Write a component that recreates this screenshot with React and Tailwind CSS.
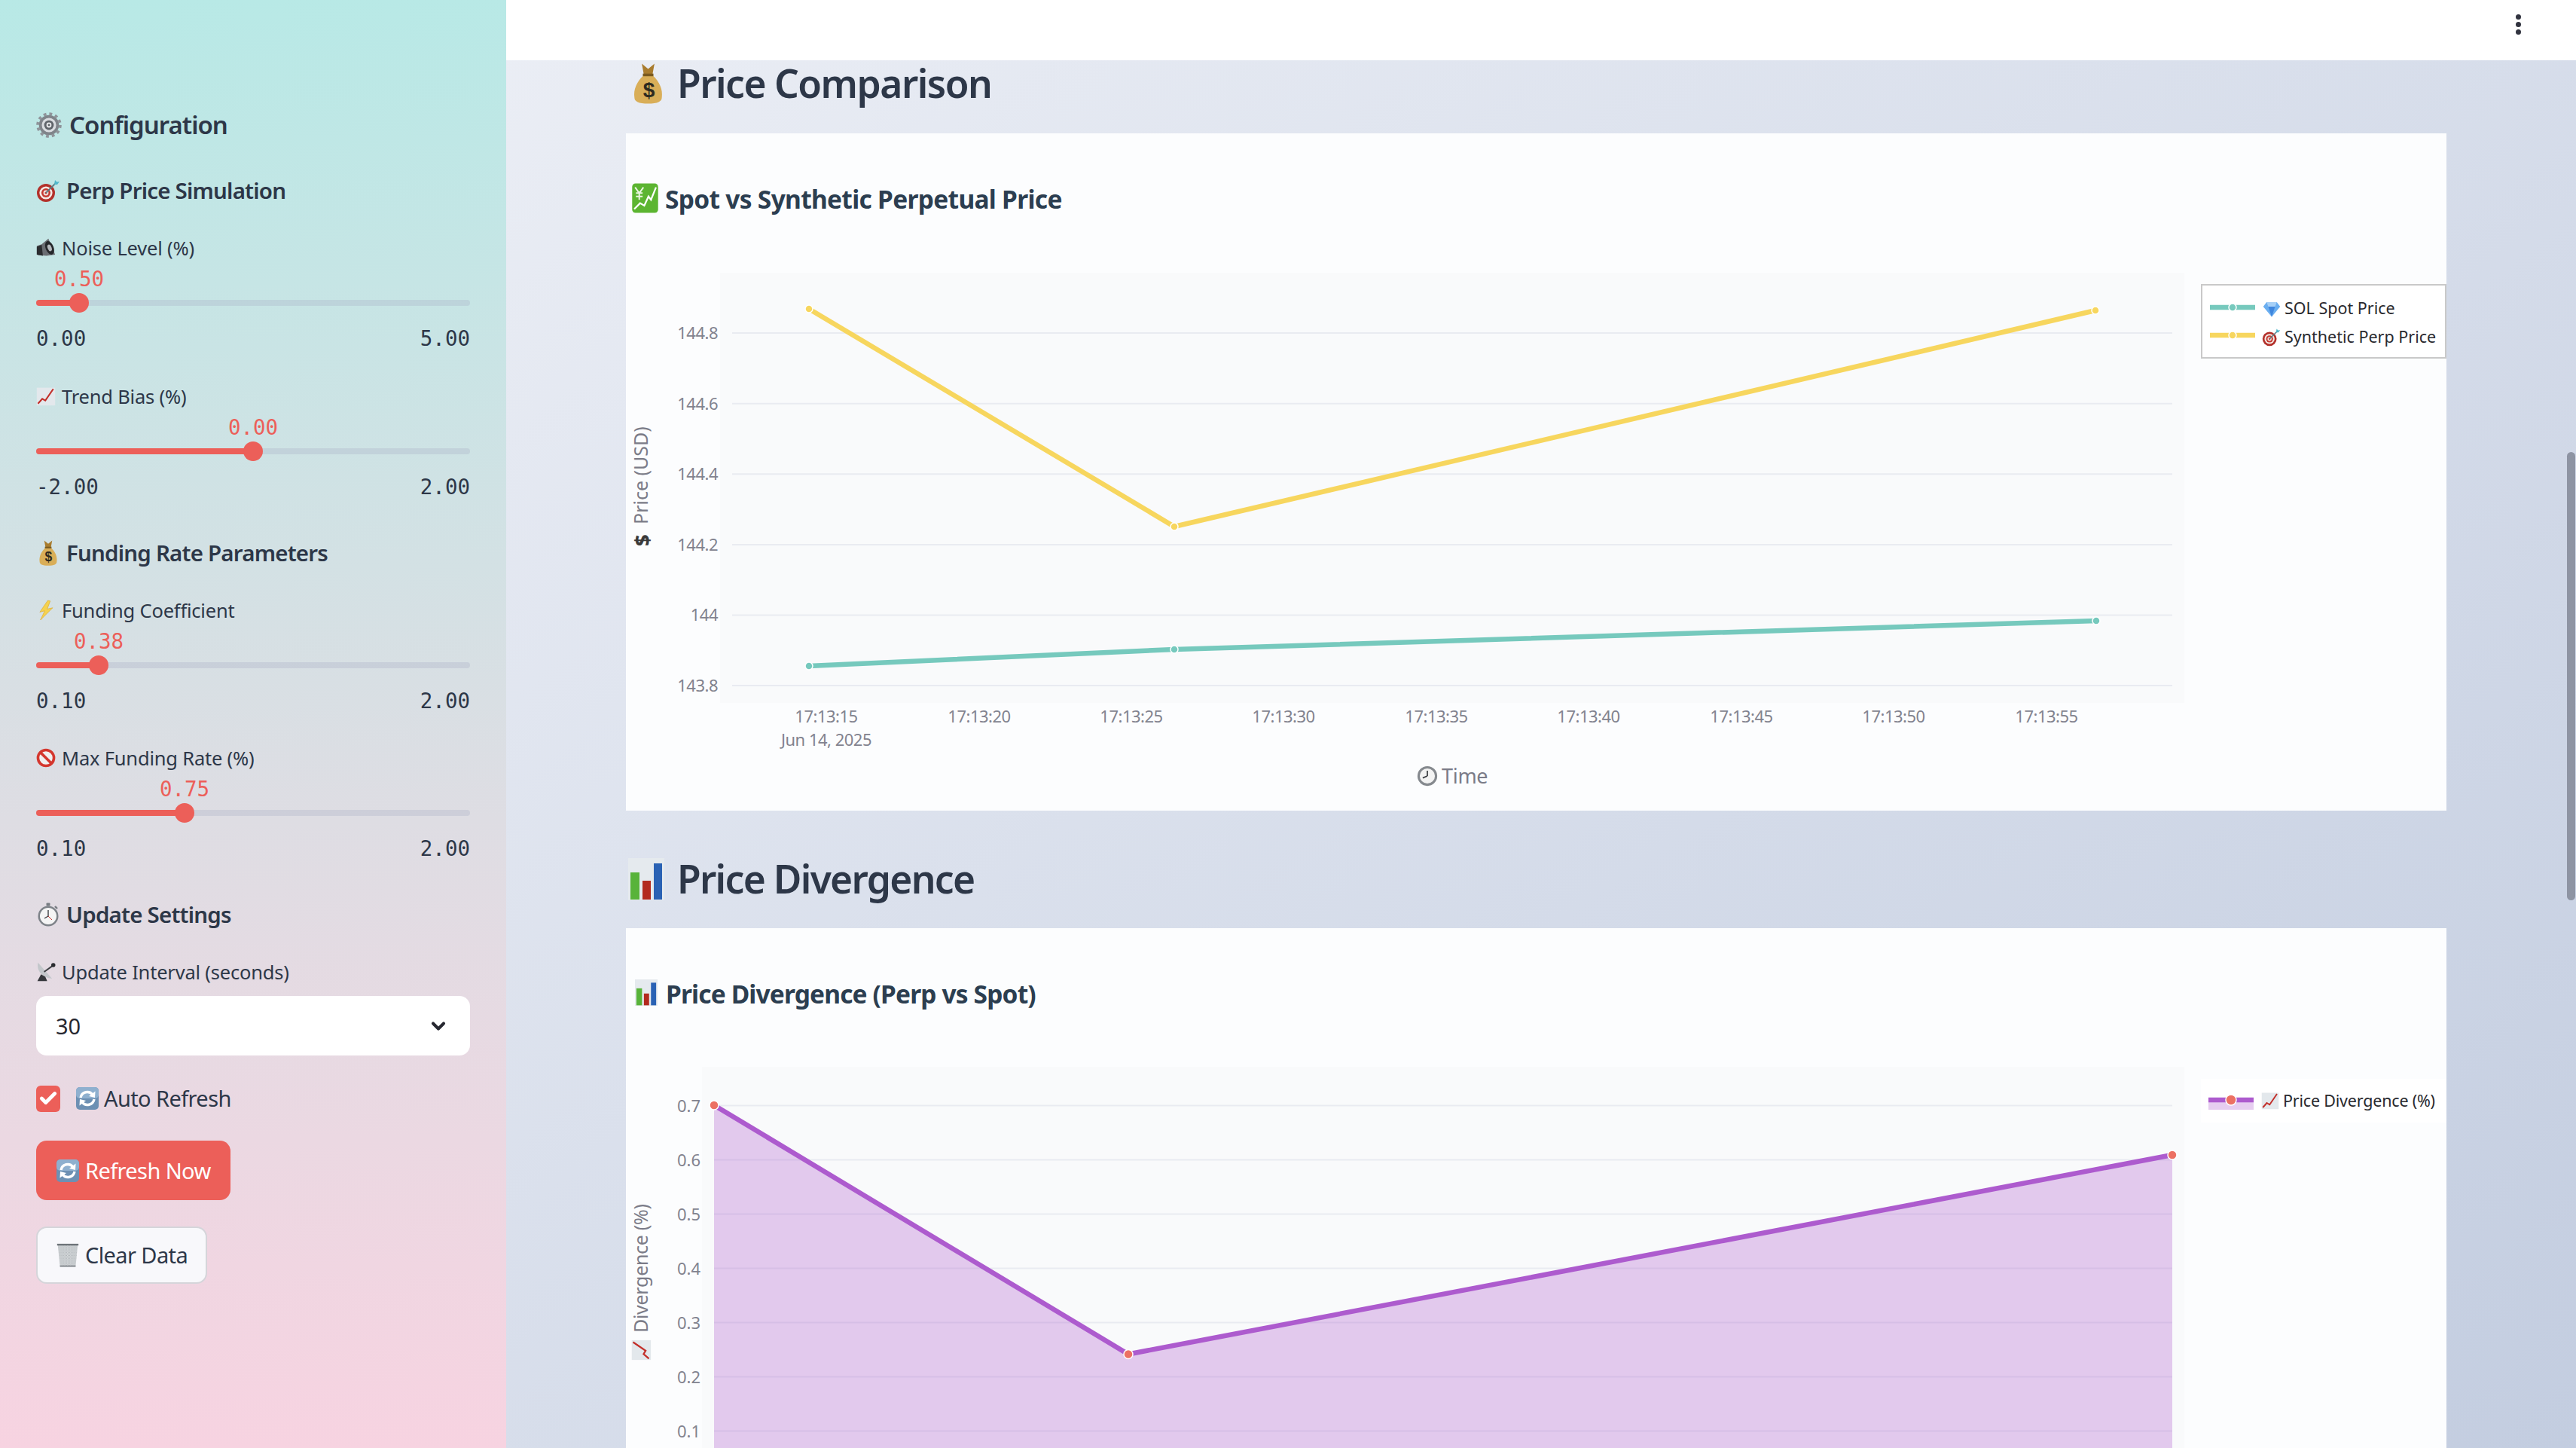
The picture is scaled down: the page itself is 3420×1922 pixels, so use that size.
import { ChevronDown, Check } from "lucide-react";

const Gear = (p) => (
  <svg viewBox="0 0 32 32" {...p}>
    <circle cx="16" cy="16" r="12.5" fill="#7f848a" />
    <circle cx="16" cy="16" r="14" fill="none" stroke="#8f949a" strokeWidth="3.6" strokeDasharray="3.6 3.73" />
    <circle cx="16" cy="16" r="9" fill="#d9dce0" />
    <circle cx="16" cy="16" r="6" fill="#5f646a" />
    <circle cx="16" cy="16" r="3.2" fill="#e8eaec" />
    <circle cx="16" cy="16" r="1.4" fill="#5f646a" />
  </svg>
);

const Target = (p) => (
  <svg viewBox="0 0 32 32" {...p}>
    <circle cx="13" cy="19" r="12" fill="#b3312b" />
    <circle cx="13" cy="19" r="8.6" fill="#f4e9e4" />
    <circle cx="13" cy="19" r="6" fill="#c63a32" />
    <circle cx="13" cy="19" r="3.4" fill="#f4e9e4" />
    <circle cx="13" cy="19" r="1.6" fill="#c63a32" />
    <path d="M13 19 L26 6" stroke="#5d7a80" strokeWidth="1.8" />
    <path d="M24 8 L25 2 L27.5 4.5 L31 4 L28 8 Z" fill="#4fb6c9" />
  </svg>
);

const Speaker = (p) => (
  <svg viewBox="0 0 32 32" {...p}>
    <path d="M1 13 L9 10 L20 1 L31 27 L17 29 L3 28 Z" fill="#6a6d72" />
    <ellipse cx="22" cy="16" rx="6.5" ry="11.5" fill="#26282b" transform="rotate(-22 22 16)" />
    <ellipse cx="22" cy="16" rx="3.2" ry="5.6" fill="#b5b9bd" transform="rotate(-22 22 16)" />
    <path d="M1 14 L1 27 L11 29 L9 11 Z" fill="#2b2d30" />
  </svg>
);

const ChartUp = (p) => (
  <svg viewBox="0 0 32 32" {...p}>
    <rect x="1" y="2" width="30" height="29" fill="#e3e8ec" />
    <path d="M3 28 L10 20 L15 23 L28 4" fill="none" stroke="#c22f2a" strokeWidth="2.6" />
  </svg>
);

const MoneyBag = (p) => (
  <svg viewBox="0 0 32 40" {...p}>
    <path d="M10 1 L16 6 L22 1 L20 12 L12 12 Z" fill="#a97c2e" />
    <path d="M12 12 C5 18 2 26 3 33 C3 37 7 39 16 39 C25 39 29 37 29 33 C30 26 27 18 20 12 Z" fill="#d9ae58" />
    <rect x="11" y="10.5" width="10" height="2.5" fill="#7a5a1f" />
    <text x="16" y="33" textAnchor="middle" fontSize="20" fontWeight="700" fill="#2e2a20" fontFamily="'Liberation Sans',sans-serif">$</text>
  </svg>
);

const Bolt = (p) => (
  <svg viewBox="0 0 32 32" {...p}>
    <path d="M19 0 L6 19 L14 17 L7 32 L27 12 L18 14 L23 1 Z" fill="#f5d24f" stroke="#dca92a" strokeWidth="0.8" />
  </svg>
);

const NoEntry = (p) => (
  <svg viewBox="0 0 32 32" {...p}>
    <circle cx="16" cy="16" r="13" fill="#f1efef" stroke="#d4372e" strokeWidth="4.4" />
    <path d="M7 7 L25 25" stroke="#d4372e" strokeWidth="4.4" />
  </svg>
);

const Stopwatch = (p) => (
  <svg viewBox="0 0 32 32" {...p}>
    <rect x="13.5" y="0.5" width="5" height="4" rx="1" fill="#777c82" />
    <path d="M25 5 L28 8" stroke="#777c82" strokeWidth="2.4" />
    <circle cx="16" cy="18" r="13.5" fill="#7d8288" />
    <circle cx="16" cy="18" r="11" fill="#f5f5f5" />
    <path d="M16 18 L16 10 M16 18 L11 21" stroke="#3c3f44" strokeWidth="1.4" />
    <path d="M16 18 L21 23" stroke="#c63a32" strokeWidth="1" />
  </svg>
);

const Dish = (p) => (
  <svg viewBox="0 0 32 32" {...p}>
    <path d="M3 1 C0 14 10 26 26 27 Z" fill="#c3c7cb" />
    <path d="M8 20 L2 31 L18 31 L15 24 Z" fill="#35383c" />
    <path d="M13 16 L27 6" stroke="#3b3e42" strokeWidth="2.4" />
    <circle cx="28" cy="5" r="3.4" fill="#2a2c2f" />
  </svg>
);

const Refresh = (p) => (
  <svg viewBox="0 0 32 32" {...p}>
    <rect x="1" y="1" width="30" height="30" rx="5" fill="#6d90b3" />
    <rect x="1" y="1" width="30" height="15" rx="5" fill="#8fb0cf" />
    <path d="M7 15 A9 9 0 0 1 23 11" fill="none" stroke="#fff" strokeWidth="3.4" />
    <path d="M26.5 6.5 L26 15 L18 13 Z" fill="#fff" />
    <path d="M25 17 A9 9 0 0 1 9 21" fill="none" stroke="#fff" strokeWidth="3.4" />
    <path d="M5.5 25.5 L6 17 L14 19 Z" fill="#fff" />
  </svg>
);

const Trash = (p) => (
  <svg viewBox="0 0 32 36" {...p}>
    <defs>
      <pattern id="mesh" width="2" height="2" patternUnits="userSpaceOnUse">
        <rect width="2" height="2" fill="#e0e3e5" />
        <rect width="1" height="1" fill="#a3a9ad" />
        <rect x="1" y="1" width="1" height="1" fill="#b9bec1" />
      </pattern>
    </defs>
    <path d="M2 4 L30 4 L27 34 L5 34 Z" fill="url(#mesh)" />
    <rect x="1" y="2" width="30" height="2.5" fill="#6e7479" />
    <rect x="5" y="32.5" width="22" height="2" fill="#82888d" />
  </svg>
);

const ChartYen = (p) => (
  <svg viewBox="0 0 32 36" {...p}>
    <rect x="0.5" y="0.5" width="31" height="35" rx="4" fill="#5cb531" />
    <path d="M4 5 L9 12 L14 5 M9 12 L9 20 M5 12 L13 12 M5 16 L13 16" fill="none" stroke="#eaf6e0" strokeWidth="1.8" />
    <path d="M3 31 L10 24 L15 27 L20 16 L23 20 L29 5" fill="none" stroke="#fff" strokeWidth="2" />
  </svg>
);

const Bars = (p) => (
  <svg viewBox="0 0 48 56" {...p}>
    <rect width="48" height="56" fill="#e5eaee" />
    <rect x="3" y="19" width="12" height="36" fill="#58b33a" />
    <rect x="19" y="30" width="11" height="25" fill="#b32a1e" />
    <rect x="34" y="7" width="11" height="48" fill="#2a62b4" />
  </svg>
);

const Diamond = (p) => (
  <svg viewBox="0 0 32 32" {...p}>
    <path d="M7 4 L25 4 L31 12 L16 30 L1 12 Z" fill="#6aaef0" />
    <path d="M10 12 L22 12 L16 30 Z" fill="#3f86de" />
    <path d="M7 4 L25 4 L22 12 L10 12 Z" fill="#a6d0f7" />
  </svg>
);

const Clock = (p) => (
  <svg viewBox="0 0 32 32" {...p}>
    <circle cx="16" cy="16" r="15" fill="#85898e" />
    <circle cx="16" cy="16" r="11.5" fill="#f3f3f3" />
    <path d="M16 16 L16 8 M16 16 L9 19" stroke="#3c3f44" strokeWidth="2" />
  </svg>
);

const mono = "font-['DejaVu_Sans_Mono',monospace]";

function SliderBlock({ icon, label, value, min, max, thumb, className }) {
  return (
    <div className={className}>
      <div className="flex h-[36px] items-center text-[25.5px] tracking-[-0.2px] text-[#2d3748]">
        <span className="mr-[8px] flex w-[26px] justify-center">{icon}</span>
        {label}
      </div>
      <div className="relative mt-[7px] h-[64px]">
        <div
          className={`absolute top-0 h-[32px] -translate-x-1/2 text-[27.5px] leading-[32px] text-[#ec5f59] ${mono}`}
          style={{ left: thumb }}
        >
          {value}
        </div>
        <div className="absolute top-[44px] h-[8px] w-full rounded-full bg-[#a5adc4]/30" />
        <div className="absolute top-[44px] h-[8px] rounded-l-full bg-[#ec5f59]" style={{ width: thumb }} />
        <div
          className="absolute top-[35px] h-[26px] w-[26px] -translate-x-1/2 rounded-full bg-[#ec5f59]"
          style={{ left: thumb }}
        />
      </div>
      <div className={`mt-[14px] flex h-[36px] items-center justify-between text-[27.5px] text-[#2d3748] ${mono}`}>
        <span>{min}</span>
        <span>{max}</span>
      </div>
    </div>
  );
}

function SideHeading({ icon, children, className }) {
  return (
    <div className={`flex h-[44px] items-center text-[29.5px] font-semibold tracking-[-0.8px] text-[#2d3748] ${className}`}>
      <span className="mr-[8px] flex w-[32px] justify-center">{icon}</span>
      {children}
    </div>
  );
}

function Sidebar() {
  return (
    <aside className="h-full w-[672px] shrink-0 bg-gradient-to-b from-[#b8e9e6] to-[#f7d3e1] pl-[48px] pr-[48px] pt-[141px]">
      <div className="flex h-[50px] items-center text-[33px] font-semibold tracking-[-1px] text-[#2d3748]">
        <Gear className="mr-[10px] h-[36px] w-[34px]" />
        Configuration
      </div>
      <SideHeading className="mt-[40px]" icon={<Target className="h-[32px] w-[32px]" />}>
        Perp Price Simulation
      </SideHeading>
      <SliderBlock
        className="mt-[36px]"
        icon={<Speaker className="h-[30px] w-[28px]" />}
        label="Noise Level (%)"
        value="0.50"
        min="0.00"
        max="5.00"
        thumb="57px"
      />
      <SliderBlock
        className="mt-[40px]"
        icon={<ChartUp className="h-[28px] w-[26px]" />}
        label="Trend Bias (%)"
        value="0.00"
        min="-2.00"
        max="2.00"
        thumb="288px"
      />
      <SideHeading className="mt-[47px]" icon={<MoneyBag className="h-[36px] w-[28px]" />}>
        Funding Rate Parameters
      </SideHeading>
      <SliderBlock
        className="mt-[36px]"
        icon={<Bolt className="h-[32px] w-[26px]" />}
        label="Funding Coefficient"
        value="0.38"
        min="0.10"
        max="2.00"
        thumb="83px"
      />
      <SliderBlock
        className="mt-[39px]"
        icon={<NoEntry className="h-[28px] w-[28px]" />}
        label="Max Funding Rate (%)"
        value="0.75"
        min="0.10"
        max="2.00"
        thumb="197px"
      />
      <SideHeading className="mt-[47px]" icon={<Stopwatch className="h-[34px] w-[32px]" />}>
        Update Settings
      </SideHeading>
      <div className="mt-[36px] flex h-[36px] items-center text-[25.5px] tracking-[-0.2px] text-[#2d3748]">
        <span className="mr-[8px] flex w-[26px] justify-center">
          <Dish className="h-[30px] w-[28px]" />
        </span>
        Update Interval (seconds)
      </div>
      <div className="mt-[14px] flex h-[79px] items-center justify-between rounded-[14px] bg-white pl-[26px] pr-[28px] text-[29px] text-[#262730]">
        30
        <ChevronDown className="h-[28px] w-[28px] text-[#262730]" strokeWidth={3.5} />
      </div>
      <div className="mt-[37px] flex h-[40px] items-center text-[29px] tracking-[-0.6px] text-[#2d3748]">
        <span className="mr-[20px] flex h-[35px] w-[32px] items-center justify-center rounded-[6px] bg-[#ec5f59]">
          <Check className="h-[26px] w-[26px] text-white" strokeWidth={4.5} />
        </span>
        <Refresh className="mr-[6px] h-[34px] w-[32px]" />
        Auto Refresh
      </div>
      <button className="mt-[36px] flex h-[79px] w-[258px] items-center rounded-[14px] bg-[#ec5f59] pl-[26px] text-[29px] tracking-[-0.6px] text-white">
        <Refresh className="mr-[7px] h-[34px] w-[32px]" />
        Refresh Now
      </button>
      <button className="mt-[35px] flex h-[76px] w-[227px] items-center rounded-[14px] border-2 border-[#d5d5da] bg-[#f8f8fb] pl-[24px] text-[29px] tracking-[-0.6px] text-[#2d3748]">
        <Trash className="mr-[7px] h-[34px] w-[32px]" />
        Clear Data
      </button>
    </aside>
  );
}

const tickProps = { fontSize: 22, fill: "#82838f", letterSpacing: "-0.5" };

function PriceChart() {
  const grid = [
    [442, "144.8"],
    [535.7, "144.6"],
    [629.3, "144.4"],
    [723, "144.2"],
    [816.4, "144"],
    [910, "143.8"],
  ];
  const xTicks = [
    [1097, "17:13:15"],
    [1300, "17:13:20"],
    [1502, "17:13:25"],
    [1704, "17:13:30"],
    [1907, "17:13:35"],
    [2109, "17:13:40"],
    [2312, "17:13:45"],
    [2514, "17:13:50"],
    [2717, "17:13:55"],
  ];
  const teal = [[1074, 884], [1559, 862], [2783, 824]];
  const yellow = [[1074, 410], [1559, 699], [2782, 412]];
  return (
    <svg viewBox="831 177 2417 899" className="block h-full w-full">
      <ChartYen x="838" y="243" width="37" height="40" />
      <text x="883" y="277" fontSize="33.5" fontWeight="700" letterSpacing="-0.7" fill="#2c3e50">Spot vs Synthetic Perpetual Price</text>
      <rect x="956" y="362" width="1944" height="571" fill="#f9fafb" />
      {grid.map(([y, t]) => (
        <g key={t}>
          <line x1="972" x2="2884" y1={y} y2={y} stroke="#e9ebf1" strokeWidth="2" />
          <text x="953" y={y + 8} textAnchor="end" {...tickProps}>{t}</text>
        </g>
      ))}
      {xTicks.map(([x, t]) => (
        <text key={t} x={x} y="959" textAnchor="middle" {...tickProps}>{t}</text>
      ))}
      <text x="1097" y="990" textAnchor="middle" {...tickProps}>Jun 14, 2025</text>
      <Clock x="1881" y="1016" width="28" height="28" />
      <text x="1914" y="1040" fontSize="27" fill="#7b7c88" letterSpacing="-0.3">Time</text>
      <g transform="rotate(-90 851 645)">
        <text x="771" y="656" fontSize="27" fontWeight="800" fill="#3a3a3a">$</text>
        <text x="800" y="654" fontSize="25" fill="#7b7c88">Price (USD)</text>
      </g>
      <polyline points={teal.join(" ")} fill="none" stroke="#76c9bd" strokeWidth="6.5" />
      <polyline points={yellow.join(" ")} fill="none" stroke="#f7d65e" strokeWidth="6.5" />
      {teal.map(([x, y]) => (
        <circle key={x} cx={x} cy={y} r="5" fill="#76c9bd" stroke="#fff" strokeWidth="1.5" />
      ))}
      {yellow.map(([x, y]) => (
        <circle key={x} cx={x} cy={y} r="5" fill="#f7d65e" stroke="#fff" strokeWidth="1.5" />
      ))}
      <rect x="2923" y="378" width="324" height="97" fill="#fff" stroke="#c9c9c9" strokeWidth="2" />
      <line x1="2934" x2="2994" y1="408" y2="408" stroke="#76c9bd" strokeWidth="6.5" />
      <circle cx="2964" cy="408" r="5" fill="#76c9bd" stroke="#fff" strokeWidth="1.5" />
      <Diamond x="3004" y="398" width="24" height="24" />
      <text x="3033" y="417" fontSize="21.5" fill="#2a2a2f">SOL Spot Price</text>
      <line x1="2934" x2="2994" y1="445" y2="445" stroke="#f7d65e" strokeWidth="6.5" />
      <circle cx="2964" cy="445" r="5" fill="#f7d65e" stroke="#fff" strokeWidth="1.5" />
      <Target x="3003" y="435" width="25" height="25" />
      <text x="3033" y="455" fontSize="21.5" fill="#2a2a2f">Synthetic Perp Price</text>
    </svg>
  );
}

function DivergenceChart() {
  const grid = [
    [1467.5, "0.7"],
    [1539.5, "0.6"],
    [1611.5, "0.5"],
    [1683.5, "0.4"],
    [1755.5, "0.3"],
    [1827.5, "0.2"],
    [1899.5, "0.1"],
  ];
  const pts = [[948, 1467], [1498, 1797.5], [2884, 1533]];
  return (
    <svg viewBox="831 1232 2417 899" className="block h-full w-full">
      <Bars x="843" y="1300" width="30" height="35" />
      <text x="884" y="1332" fontSize="33.5" fontWeight="700" letterSpacing="-0.85" fill="#2c3e50">Price Divergence (Perp vs Spot)</text>
      <rect x="932" y="1416" width="1968" height="715" fill="#f9fafb" />
      {grid.map(([y, t]) => (
        <g key={t}>
          <line x1="948" x2="2884" y1={y} y2={y} stroke="#e9ebf1" strokeWidth="2" />
          <text x="930" y={y + 8} textAnchor="end" {...tickProps} letterSpacing="0">{t}</text>
        </g>
      ))}
      <polygon points="948,1467 1498,1797.5 2884,1533 2884,2131 948,2131" fill="#ab5bcd" fillOpacity="0.3" />
      <polyline points={pts.join(" ")} fill="none" stroke="#ad5bce" strokeWidth="6.5" />
      {pts.map(([x, y]) => (
        <circle key={x} cx={x} cy={y} r="6" fill="#ec7063" stroke="#fff" strokeWidth="1.5" />
      ))}
      <g transform="rotate(-90 851 1700)">
        <ChartUp x="745" y="1686" width="28" height="28" />
        <text x="782" y="1709" fontSize="25" letterSpacing="-0.3" fill="#7b7c88">Divergence (%)</text>
      </g>
      <rect x="2922" y="1432" width="326" height="58" fill="#fff" />
      <rect x="2932" y="1460" width="60" height="13" fill="#e6cdf0" />
      <line x1="2932" x2="2992" y1="1460" y2="1460" stroke="#ad5bce" strokeWidth="6.5" />
      <circle cx="2962" cy="1460" r="7" fill="#ec7063" stroke="#fff" strokeWidth="1.5" />
      <ChartUp x="3002" y="1448" width="24" height="26" />
      <text x="3031" y="1469" fontSize="21.5" letterSpacing="-0.2" fill="#2a2a2f">Price Divergence (%)</text>
    </svg>
  );
}

function SectionTitle({ icon, children, className }) {
  return (
    <div className={`flex h-[62px] items-center text-[51.5px] font-semibold tracking-[-1.5px] text-[#2d3748] ${className}`}>
      {icon}
      {children}
    </div>
  );
}

export default function App() {
  return (
    <div className="flex h-[1922px] w-[3420px] overflow-hidden font-['Noto_Sans',sans-serif]">
      <Sidebar />
      <main className="relative flex h-full flex-1 flex-col overflow-hidden bg-gradient-to-br from-[#ebeef5] to-[#c3cde0]">
        <div className="flex h-[80px] shrink-0 items-center justify-end bg-white pb-[16px] pr-[73px]">
          <div className="flex flex-col gap-[3px]">
            <span className="h-[7px] w-[7px] rounded-full bg-[#31333f]" />
            <span className="h-[7px] w-[7px] rounded-full bg-[#31333f]" />
            <span className="h-[7px] w-[7px] rounded-full bg-[#31333f]" />
          </div>
        </div>
        <div className="flex flex-col pl-[159px] pr-[172px]">
          <SectionTitle icon={<MoneyBag className="ml-[7px] mr-[16px] h-[56px] w-[45px]" />}>Price Comparison</SectionTitle>
          <div className="mt-[35px] h-[899px] shrink-0 bg-[#fcfdfe]">
            <PriceChart />
          </div>
          <SectionTitle className="mt-[60px]" icon={<Bars className="ml-[3px] mr-[17px] h-[56px] w-[48px]" />}>
            <span className="tracking-[-1.7px]">Price Divergence</span>
          </SectionTitle>
          <div className="mt-[34px] h-[899px] shrink-0 bg-[#fcfdfe]">
            <DivergenceChart />
          </div>
        </div>
        <div className="absolute right-[1px] top-[600px] h-[595px] w-[11px] rounded-full bg-[#8e94a3]" />
      </main>
    </div>
  );
}
